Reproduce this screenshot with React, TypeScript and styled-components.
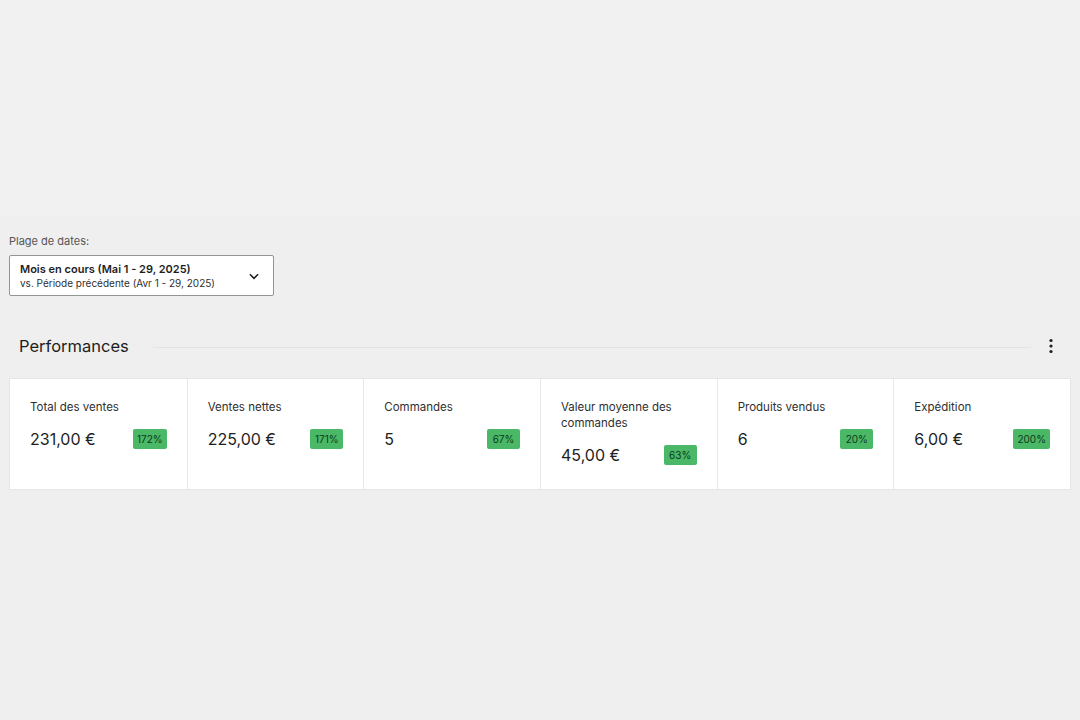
import React from "react";
import styled, {createGlobalStyle} from "styled-components";

const Global = createGlobalStyle`
  html, body {
    margin: 0;
    padding: 0;
    background: #efefef;
    font-family: Inter, "Noto Sans", sans-serif;
    color: #1e1e1e;
  }
`

const Page = styled.div`
  width: 1080px;
  height: 720px;
  background: #efefef;
`

const TopBand = styled.div`
  height: 215px;
  background: #f1f1f1;
`

const Content = styled.div`
  padding: 19px 9px 0 9px;
`

const Label = styled.div`
  font-size: 11px;
  line-height: 14px;
  color: #555;
  margin-bottom: 7px;
`

const Select = styled.div`
  width: 265px;
  height: 41px;
  box-sizing: border-box;
  border: 1px solid #949494;
  border-radius: 2px;
  background: white;
  display: flex;
  align-items: center;
  justify-content: space-between;
  padding: 0 12px 0 10px;
  > .text{
    display: flex;
    flex-direction: column;
    gap: 1px;
  }
  .main{
    font-size: 11px;
    font-weight: 600;
    line-height: 14px;
    color: #1e1e1e;
  }
  .sub{
    font-size: 10px;
    line-height: 13px;
    color: #2f2f2f;
  }
`

const Header = styled.div`
  display: flex;
  align-items: center;
  margin-top: 28px;
  padding: 0 10px;
  height: 44px;
  > h2{
    margin: 0;
    font-size: 16.5px;
    font-weight: 400;
    color: #1e1e1e;
  }
  > .line{
    flex: 1;
    height: 1px;
    background: #e2e2e2;
    margin: 2px 10px 0 24px;
  }
  > .menu{
    width: 20px;
    display: flex;
    justify-content: center;
  }
`

const Cards = styled.div`
  margin-top: 10px;
  display: grid;
  grid-template-columns: repeat(6, 1fr);
  background: white;
  border: 1px solid #e6e6e6;
  height: 112px;
  box-sizing: border-box;
`

const Card = styled.div`
  padding: 20px 20px 0 20px;
  border-left: 1px solid #e8e8e8;
  &:first-child{
    border-left: none;
  }
  > .title{
    font-size: 11.5px;
    line-height: 16px;
    color: #2f2f2f;
  }
  > .row{
    display: flex;
    align-items: center;
    justify-content: space-between;
    margin-top: 14px;
  }
  .value{
    font-size: 16px;
    color: #1e1e1e;
  }
`

const Badge = styled.span`
  background: #4ab866;
  color: #0c3b1b;
  font-size: 10px;
  line-height: 20px;
  height: 20px;
  padding: 0 4px;
  border-radius: 2px;
  min-width: 25px;
  text-align: center;
`

type Stat = {
    title: string
    value: string
    delta: string
}

const stats: Stat[] = [
    {title: 'Total des ventes', value: '231,00 €', delta: '172%'},
    {title: 'Ventes nettes', value: '225,00 €', delta: '171%'},
    {title: 'Commandes', value: '5', delta: '67%'},
    {title: 'Valeur moyenne des commandes', value: '45,00 €', delta: '63%'},
    {title: 'Produits vendus', value: '6', delta: '20%'},
    {title: 'Expédition', value: '6,00 €', delta: '200%'},
]

const App = () => {
    return (
        <Page>
            <Global/>
            <TopBand/>
            <Content>
                <Label>Plage de dates:</Label>
                <Select>
                    <div className="text">
                        <span className="main">Mois en cours (Mai 1 - 29, 2025)</span>
                        <span className="sub">vs. Période précédente (Avr 1 - 29, 2025)</span>
                    </div>
                    <svg width="14" height="14" viewBox="0 0 24 24">
                        <path d="M5 9l7 7 7-7" fill="none" stroke="#1e1e1e" strokeWidth="2.6"/>
                    </svg>
                </Select>
                <Header>
                    <h2>Performances</h2>
                    <div className="line"/>
                    <div className="menu">
                        <svg width="6" height="16" viewBox="0 0 6 16">
                            <circle cx="3" cy="2.5" r="1.6" fill="#1e1e1e"/>
                            <circle cx="3" cy="8" r="1.6" fill="#1e1e1e"/>
                            <circle cx="3" cy="13.5" r="1.6" fill="#1e1e1e"/>
                        </svg>
                    </div>
                </Header>
                <Cards>
                    {stats.map(s =>
                        <Card key={s.title}>
                            <div className="title">{s.title}</div>
                            <div className="row">
                                <span className="value">{s.value}</span>
                                <Badge>{s.delta}</Badge>
                            </div>
                        </Card>
                    )}
                </Cards>
            </Content>
        </Page>
    )
}

export default App
